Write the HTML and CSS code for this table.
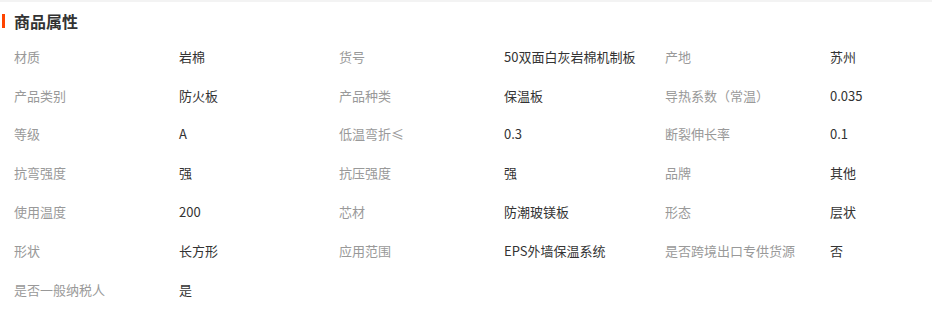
FILE: index.html
```html
<!DOCTYPE html>
<html lang="zh-CN">
<head>
<meta charset="utf-8">
<title>商品属性</title>
<link rel="stylesheet" href="styles.css">
</head>
<body>
<div class="topline"></div>
<div class="panel">
  <div class="header">
    <span class="bar"></span>
    <h2 class="title">商品属性</h2>
  </div>
  <div class="attrs">
    <div class="k">材质</div><div class="v">岩棉</div>
    <div class="k">货号</div><div class="v">50双面白灰岩棉机制板</div>
    <div class="k">产地</div><div class="v">苏州</div>

    <div class="k">产品类别</div><div class="v">防火板</div>
    <div class="k">产品种类</div><div class="v">保温板</div>
    <div class="k">导热系数（常温）</div><div class="v">0.035</div>

    <div class="k">等级</div><div class="v">A</div>
    <div class="k">低温弯折≤</div><div class="v">0.3</div>
    <div class="k">断裂伸长率</div><div class="v">0.1</div>

    <div class="k">抗弯强度</div><div class="v">强</div>
    <div class="k">抗压强度</div><div class="v">强</div>
    <div class="k">品牌</div><div class="v">其他</div>

    <div class="k">使用温度</div><div class="v">200</div>
    <div class="k">芯材</div><div class="v">防潮玻镁板</div>
    <div class="k">形态</div><div class="v">层状</div>

    <div class="k">形状</div><div class="v">长方形</div>
    <div class="k">应用范围</div><div class="v">EPS外墙保温系统</div>
    <div class="k">是否跨境出口专供货源</div><div class="v">否</div>

    <div class="k">是否一般纳税人</div><div class="v">是</div>
  </div>
</div>
</body>
</html>
```
FILE: styles.css
```css
html, body {
  margin: 0;
  padding: 0;
  background: #fff;
}
body {
  font-family: "Noto Sans CJK SC", "Microsoft YaHei", sans-serif;
  font-size: 13px;
  color: #333;
  width: 932px;
  height: 315px;
  overflow: hidden;
}
.topline {
  height: 2px;
  background: #f3f3f3;
}
.header {
  display: flex;
  align-items: center;
  height: 37px;
  padding-left: 2px;
  gap: 9px;
}
.bar {
  width: 3px;
  height: 14px;
  background: #ff4400;
}
.title {
  margin: 0;
  font-size: 16px;
  font-weight: bold;
  color: #333;
  line-height: 1;
}
.attrs {
  display: grid;
  grid-template-columns: 165px 160px 165px 161px 165px 1fr;
  grid-auto-rows: 38.8px;
  padding-left: 14px;
  margin-top: -2px;
}
.k, .v {
  display: flex;
  align-items: center;
  white-space: nowrap;
  line-height: 1;
}
.k {
  color: #999;
}
.v {
  color: #333;
}
```
